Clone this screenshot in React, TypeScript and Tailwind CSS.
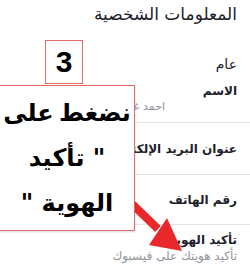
export default function App() {
  return (
    <div
      dir="rtl"
      className="relative w-[250px] h-[275px] overflow-hidden bg-white text-[#1d2129]"
      style={{ fontFamily: '"DejaVu Sans", "Noto Sans", sans-serif' }}
    >
      <h1 className="pr-[13px] pt-[3px] text-[17px] leading-[22px] font-normal">
        المعلومات الشخصية
      </h1>

      <div className="pr-[13px] pt-[30px] text-[14px] leading-[18px]">عام</div>

      <div className="flex flex-col pt-[10px]">
        <div className="pr-[13px] h-[40px] border-b border-[#e5e5e5] flex flex-col">
          <span className="text-[12px] leading-[16px] font-semibold">الاسم</span>
          <span className="pr-[72px] text-[11px] leading-[16px] text-[#90949c] whitespace-nowrap">احمد غريب</span>
        </div>
        <div className="pr-[13px] h-[52px] border-b border-[#e5e5e5] flex items-center">
          <span className="text-[12px] leading-[16px] font-semibold whitespace-nowrap">عنوان البريد الإلكتروني</span>
        </div>
        <div className="pr-[13px] h-[50px] border-b border-[#e5e5e5] flex items-center">
          <span className="text-[12px] leading-[16px] font-semibold">رقم الهاتف</span>
        </div>
        <div className="pr-[13px] pt-[7px] flex flex-col">
          <span className="text-[12px] leading-[16px] font-bold">تأكيد الهوية</span>
          <span className="text-[12px] leading-[17px] text-[#90949c]">تأكيد هويتك على فيسبوك</span>
        </div>
      </div>

      {/* arrow, under the callout */}
      <svg className="absolute left-0 top-0" width="250" height="275" viewBox="0 0 250 275">
        <path d="M128 200 L158 229" stroke="#e8282b" strokeWidth="8" />
        <path d="M167 218 L149 245 L182 251 Z" fill="#e8282b" />
      </svg>

      {/* callout */}
      <div className="absolute left-[45px] top-[40px] w-[38px] h-[44px] bg-white border border-[#e06b6b] flex items-center justify-center">
        <span
          className="text-[30px] font-bold leading-none text-black"
          style={{ fontFamily: '"Liberation Sans", Arial, sans-serif' }}
        >
          3
        </span>
      </div>
      <div className="absolute left-[-1px] top-[85px] w-[136px] h-[146px] bg-white border border-[#e06b6b] shadow-[0_1px_2px_rgba(0,0,0,0.15)] flex flex-col items-center justify-center text-black whitespace-nowrap">
        <span className="text-[24px] font-bold leading-[45px] [word-spacing:-3px]">نضغط على</span>
        <span className="text-[24px] font-bold leading-[45px]">" تأكيد</span>
        <span className="text-[24px] font-bold leading-[45px]">الهوية "</span>
      </div>
    </div>
  )
}
